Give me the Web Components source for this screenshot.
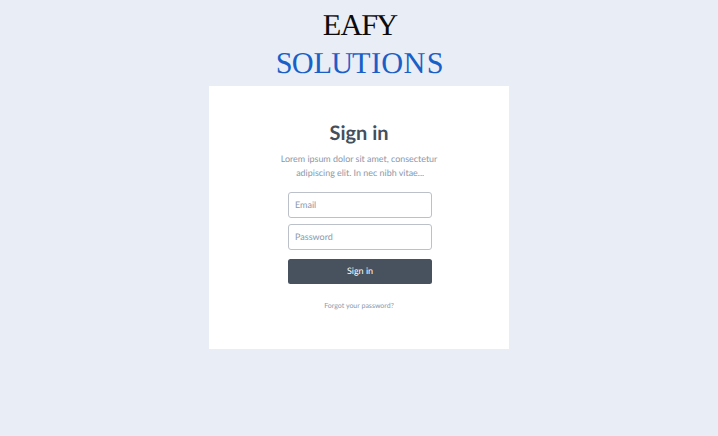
<!DOCTYPE html>
<html lang="en"><head><meta charset="utf-8"><title>Sign in</title>
<style>body{margin:0;background:#e9edf5;font-family:Lato,sans-serif;text-rendering:geometricPrecision}</style></head>
<body><signin-page></signin-page>
<script>
const define=(name,html)=>customElements.define(name,class extends HTMLElement{
 constructor(){super();this.attachShadow({mode:'open'}).innerHTML=html;}
});
define('brand-logo',`<style>
:host{display:block;height:86px;box-sizing:border-box;padding-top:6px;font-family:"Liberation Serif",serif}
svg{display:block;overflow:visible}
text{font-size:30.3px}
</style><svg width="180" height="80" viewBox="0 0 180 80">
<text x="53.7 71.5 92.3 107.3" y="28.9" fill="#0b0b0d">EAFY</text>
<text x="6.8 22.8 44.4 62.3 83 102 112.2 134.6 157.8" y="67" fill="#1a5fc8">SOLUTIONS</text></svg>`);
define('text-field',`<style>
:host{display:flex;align-items:center;box-sizing:border-box;width:144px;height:26px;padding:0 6px 1px;border:1px solid #bcc1c9;border-radius:3px;background:#fff;color:#8c98aa;font-size:9px}
</style><slot></slot>`);
define('submit-button',`<style>
:host{display:flex;align-items:center;justify-content:center;box-sizing:border-box;width:144px;height:25px;padding-bottom:2px;border-radius:2.5px;background:#48525e;color:#fff;font-size:9px}
</style><slot></slot>`);
define('signin-card',`<style>
:host{display:flex;flex-direction:column;align-items:center;box-sizing:border-box;width:300px;height:263px;padding-top:35px;background:#fff}
h1{margin:0;font-size:20px;line-height:24px;color:#454f5b}
p{margin:7px 0 12px;font-size:8.93px;line-height:14px;color:#8c98aa;text-align:center;white-space:nowrap}
form{margin:0 0 0 2px;display:flex;flex-direction:column;gap:6px}
submit-button{margin-top:3px}
a{margin-top:18px;font-size:7px;line-height:9px;color:#8c98aa}
</style><h1>Sign in</h1><p>Lorem ipsum dolor sit amet, consectetur<br>&nbsp;adipiscing elit. In nec nibh vitae...</p>
<form><text-field>Email</text-field><text-field>Password</text-field><submit-button>Sign in</submit-button></form><a>Forgot your password?</a>`);
define('signin-page',`<style>
:host{display:flex;flex-direction:column;align-items:center;height:436px}
</style><brand-logo></brand-logo><signin-card></signin-card>`);
</script></body></html>
